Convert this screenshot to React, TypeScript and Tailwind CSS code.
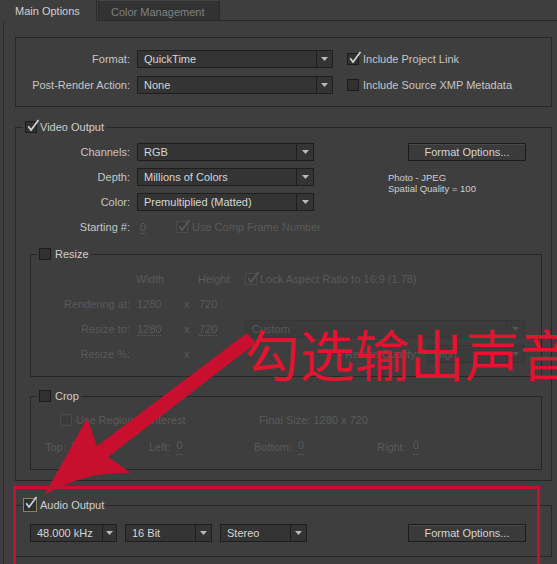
import React from "react";

type Tone = "normal" | "dim" | "audio";

function Check({ checked, tone = "normal" }: { checked?: boolean; tone?: Tone }) {
  const box =
    tone === "audio"
      ? "w-[14px] h-[14px] border-[#8c8452] bg-[#2f2f2f]"
      : tone === "dim"
      ? "w-[12px] h-[12px] border-[#4b4b4b] bg-[#3b3b3b]"
      : "w-[12px] h-[12px] border-[#1c1c1c] bg-[#313131]";
  const stroke = tone === "dim" ? "#595959" : tone === "audio" ? "#c9cde6" : "#d2d2d2";
  return (
    <span className={`relative inline-block shrink-0 border ${box}`}>
      {checked && (
        <svg className="absolute left-[0px] top-[-3px]" width="14" height="14" viewBox="0 0 14 14">
          <path d="M2.2 7.2 L5 11 L12.5 1" stroke={stroke} strokeWidth="1.7" fill="none" />
        </svg>
      )}
    </span>
  );
}

function Drop({ text, w, dim, arrow = "w-[16px]" }: { text: string; w: string; dim?: boolean; arrow?: string }) {
  return (
    <div
      className={`${w} h-[18px] shrink-0 flex items-stretch border ${
        dim ? "border-[#363636] bg-[#3b3b3b] text-[#575757]" : "border-[#1e1e1e] bg-[#343434] text-[#d6d6d6]"
      }`}
    >
      <span className="flex-1 pl-[6px] flex items-center whitespace-nowrap overflow-hidden">{text}</span>
      <span
        className={`${arrow} border-l flex items-center justify-center ${
          dim ? "border-[#363636]" : "border-[#1e1e1e]"
        }`}
      >
        <svg width="7" height="4" viewBox="0 0 7 4">
          <path d="M0 0H7L3.5 4Z" fill={dim ? "#555555" : "#b9b9b9"} />
        </svg>
      </span>
    </div>
  );
}

function Button({ children }: { children: React.ReactNode }) {
  return (
    <div className="w-[118px] h-[18px] flex items-center justify-center border border-[#1c1c1c] bg-[#3a3a3a] text-[#d4d4d4] shadow-[inset_0_1px_0_#4a4a4a]">
      {children}
    </div>
  );
}

function Under({ children }: { children: React.ReactNode }) {
  return <span className="inline-block leading-[12px] border-b border-dotted border-[#5c5c5c]">{children}</span>;
}

export default function App() {
  return (
    <div className="w-[557px] h-[564px] bg-[#3e3e3e] relative overflow-hidden font-['Liberation_Sans',Arial,sans-serif] text-[11px] text-[#c6c6c6]">
      {/* tabs */}
      <div className="flex h-[21px]">
        <div className="w-[97px] h-[21px] pl-[15px] pt-[3px] text-[#d0d0d0] border-r border-[#2c2c2c]">Main Options</div>
        <div className="ml-[1px] w-[122px] h-[21px] pl-[12px] pt-[3px] bg-[#323232] border border-[#2a2a2a] border-t-[#454545] text-[#808080]">
          Color Management
        </div>
        <div className="flex-1 border-b border-[#2a2a2a]" />
      </div>

      {/* body */}
      <div className="h-[543px] ml-[3px] border-l border-[#2c2c2c] pl-[11px] pr-[5px] pt-[16px]">
        {/* format box */}
        <div className="border border-[#272727] pt-[12px] pb-[12px] flex flex-col gap-[8px]">
          <div className="flex items-center h-[18px]">
            <span className="w-[114px] text-right">Format:</span>
            <div className="ml-[7px]">
              <Drop w="w-[196px]" text="QuickTime" />
            </div>
            <span className="ml-[14px] flex items-center gap-[4px]">
              <Check checked />
              <span>Include Project Link</span>
            </span>
          </div>
          <div className="flex items-center h-[18px]">
            <span className="w-[114px] text-right">Post-Render Action:</span>
            <div className="ml-[7px]">
              <Drop w="w-[196px]" text="None" />
            </div>
            <span className="ml-[14px] flex items-center gap-[4px]">
              <Check />
              <span>Include Source XMP Metadata</span>
            </span>
          </div>
        </div>

        {/* video output */}
        <fieldset className="mt-[13px] border border-[#272727] min-w-0">
          <legend className="ml-[7px] px-[2px]">
            <span className="flex items-center h-[14px] gap-[3px]">
              <Check checked />
              <span className="text-[#cfcfcf]">Video Output</span>
            </span>
          </legend>
          <div className="pt-[9px] pb-[10px]">
            <div className="flex">
              <div className="w-[298px] shrink-0 flex flex-col gap-[7px]">
                <div className="flex items-center h-[18px]">
                  <span className="w-[114px] text-right">Channels:</span>
                  <div className="ml-[7px]">
                    <Drop w="w-[177px]" text="RGB" arrow="w-[17px]" />
                  </div>
                </div>
                <div className="flex items-center h-[18px]">
                  <span className="w-[114px] text-right">Depth:</span>
                  <div className="ml-[7px]">
                    <Drop w="w-[177px]" text="Millions of Colors" arrow="w-[17px]" />
                  </div>
                </div>
                <div className="flex items-center h-[18px]">
                  <span className="w-[114px] text-right">Color:</span>
                  <div className="ml-[7px]">
                    <Drop w="w-[177px]" text="Premultiplied (Matted)" arrow="w-[17px]" />
                  </div>
                </div>
                <div className="flex items-center h-[18px] whitespace-nowrap">
                  <span className="w-[114px] shrink-0 text-right">Starting #:</span>
                  <span className="ml-[10px] w-[36px] shrink-0 text-[#5a5a5a]">
                    <Under>0</Under>
                  </span>
                  <span className="flex items-center gap-[4px] text-[#5a5a5a]">
                    <Check checked tone="dim" />
                    <span>Use Comp Frame Number</span>
                  </span>
                </div>
              </div>
              <div className="ml-[74px] flex flex-col">
                <div className="ml-[20px]">
                  <Button>Format Options...</Button>
                </div>
                <div className="mt-[11px] text-[9.5px] leading-[11px] text-[#cfcfcf]">
                  <div>Photo - JPEG</div>
                  <div>Spatial Quality = 100</div>
                </div>
              </div>
            </div>

            {/* resize */}
            <fieldset className="mt-[11px] ml-[14px] mr-[9px] border border-[#272727] min-w-0">
              <legend className="ml-[6px] px-[2px]">
                <span className="flex items-center h-[14px] gap-[4px]">
                  <Check />
                  <span className="text-[#cfcfcf]">Resize</span>
                </span>
              </legend>
              <div className="pt-[9px] pb-[13px] flex flex-col gap-[7px] text-[#5a5a5a]">
                <div className="flex items-center h-[18px]">
                  <span className="w-[99px]" />
                  <span className="ml-[6px] w-[62px]">Width</span>
                  <span className="w-[47px]">Height</span>
                  <span className="flex items-center gap-[3px]">
                    <Check checked tone="dim" />
                    <span>Lock Aspect Ratio to 16:9 (1.78)</span>
                  </span>
                </div>
                <div className="flex items-center h-[18px]">
                  <span className="w-[99px] text-right">Rendering at:</span>
                  <span className="ml-[7px] w-[47px]">1280</span>
                  <span className="w-[15px]">x</span>
                  <span className="w-[46px]">720</span>
                </div>
                <div className="flex items-center h-[18px]">
                  <span className="w-[99px] text-right">Resize to:</span>
                  <span className="ml-[7px] w-[47px]">
                    <Under>1280</Under>
                  </span>
                  <span className="w-[15px]">x</span>
                  <span className="w-[46px]">
                    <Under>720</Under>
                  </span>
                  <Drop dim w="w-[280px]" text="Custom" arrow="w-[18px]" />
                </div>
                <div className="flex items-center h-[18px]">
                  <span className="w-[99px] text-right">Resize %:</span>
                  <span className="ml-[7px] w-[47px]" />
                  <span className="w-[15px]">x</span>
                  <span className="w-[46px]" />
                  <div className="w-[280px] flex justify-end items-center gap-[8px] whitespace-nowrap">
                    <span>Resize Quality:</span>
                    <Drop dim w="w-[98px]" text="High" arrow="w-[18px]" />
                  </div>
                </div>
              </div>
            </fieldset>

            {/* crop */}
            <fieldset className="mt-[12px] ml-[14px] mr-[9px] border border-[#272727] min-w-0">
              <legend className="ml-[6px] px-[2px]">
                <span className="flex items-center h-[14px] gap-[4px]">
                  <Check />
                  <span className="text-[#cfcfcf]">Crop</span>
                </span>
              </legend>
              <div className="pt-[8px] pb-[13px] flex flex-col gap-[9px] text-[#5a5a5a]">
                <div className="flex items-center h-[18px]">
                  <span className="ml-[29px] w-[199px] flex items-center gap-[4px]">
                    <Check tone="dim" />
                    <span>Use Region of Interest</span>
                  </span>
                  <span>Final Size: 1280 x 720</span>
                </div>
                <div className="flex items-center h-[18px]">
                  <span className="ml-[14px] w-[104px] flex gap-[6px]">
                    <span>Top:</span>
                    <Under>0</Under>
                  </span>
                  <span className="w-[105px] flex gap-[6px]">
                    <span>Left:</span>
                    <Under>0</Under>
                  </span>
                  <span className="w-[123px] flex gap-[6px]">
                    <span>Bottom:</span>
                    <Under>0</Under>
                  </span>
                  <span className="flex gap-[7px]">
                    <span>Right:</span>
                    <Under>0</Under>
                  </span>
                </div>
              </div>
            </fieldset>
          </div>
        </fieldset>

        {/* audio output */}
        <fieldset className="mt-[16px] border border-[#272727] min-w-0">
          <legend className="ml-[6px] px-[1px]">
            <span className="flex items-center h-[16px] gap-[3px]">
              <Check checked tone="audio" />
              <span className="text-[#cfcfcf]">Audio Output</span>
            </span>
          </legend>
          <div className="pt-[11px] pb-[14px] pl-[14px] flex items-center gap-[8px]">
            <Drop w="w-[87px]" text="48.000 kHz" arrow="w-[14px]" />
            <Drop w="w-[87px]" text="16 Bit" arrow="w-[16px]" />
            <Drop w="w-[87px]" text="Stereo" arrow="w-[16px]" />
            <div className="ml-[93px]">
              <Button>Format Options...</Button>
            </div>
          </div>
        </fieldset>
      </div>

      {/* annotations */}
      <div className="absolute left-[13px] top-[486px] w-[527px] h-[100px] border-[3px] border-[#c4112f]" />
      <div className="absolute left-[245px] top-[325px] text-[55px] leading-none whitespace-nowrap text-[#e3142f] font-['Noto_Sans_CJK_SC',sans-serif]">
        勾选输出声音
      </div>
      <svg className="absolute left-0 top-0 pointer-events-none" width="557" height="564" viewBox="0 0 557 564">
        <path
          d="M44 495 Q66 458 87 418 L97 446 L247 333 L256 343 L108 457 L131 473 Q86 471 44 495 Z"
          fill="#c8102e"
        />
      </svg>
    </div>
  );
}
